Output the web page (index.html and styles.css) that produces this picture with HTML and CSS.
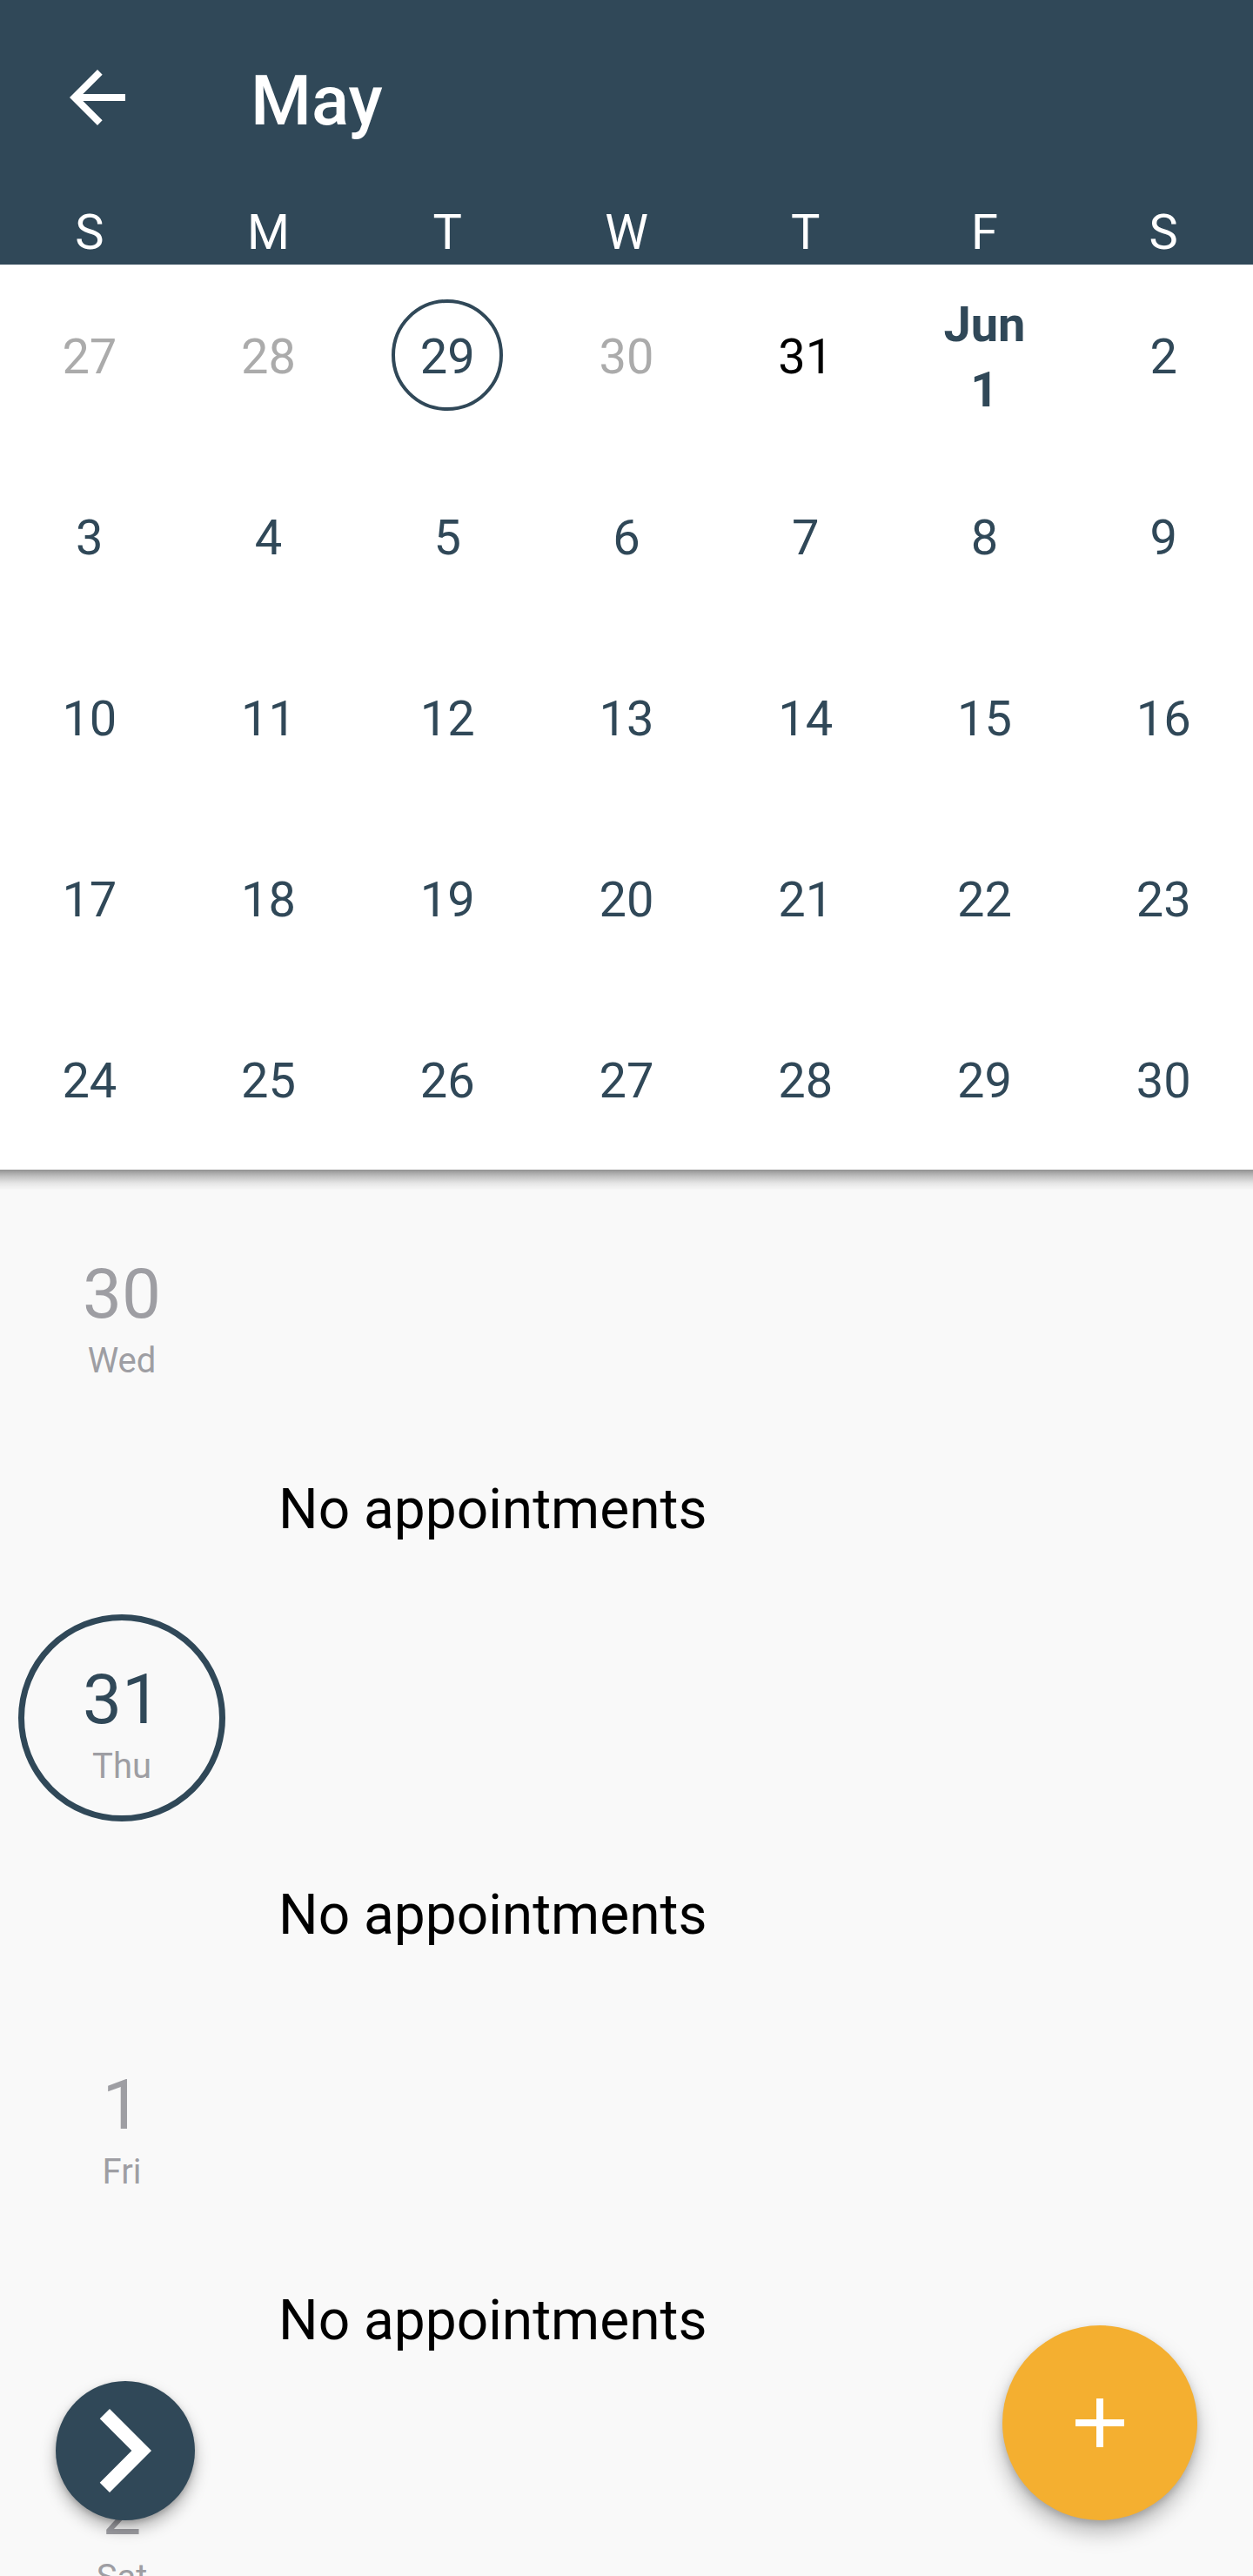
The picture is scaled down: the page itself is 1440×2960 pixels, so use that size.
FILE: index.html
```html
<!DOCTYPE html>
<html lang="en">
<head>
<meta charset="utf-8">
<title>May</title>
<link rel="stylesheet" href="styles.css">
</head>
<body>
<div class="screen">
  <header class="appbar">
    <div class="toolbar">
      <div class="nav-btn">
        <svg class="nav-icon" viewBox="0 0 24 24" width="96" height="96"><path fill="#ffffff" d="M20 11H7.83l5.59-5.59L12 4l-8 8 8 8 1.41-1.41L7.83 13H20v-2z"/></svg>
      </div>
      <h1 class="title">May</h1>
    </div>
    <div class="weekdays">
      <span>S</span><span>M</span><span>T</span><span>W</span><span>T</span><span>F</span><span>S</span>
    </div>
  </header>

  <section class="month">
    <div class="day muted">27</div>
    <div class="day muted">28</div>
    <div class="day"><span class="today-ring">29</span></div>
    <div class="day muted">30</div>
    <div class="day selected">31</div>
    <div class="day month-start"><span>Jun</span><span>1</span></div>
    <div class="day">2</div>

    <div class="day">3</div><div class="day">4</div><div class="day">5</div><div class="day">6</div><div class="day">7</div><div class="day">8</div><div class="day">9</div>
    <div class="day">10</div><div class="day">11</div><div class="day">12</div><div class="day">13</div><div class="day">14</div><div class="day">15</div><div class="day">16</div>
    <div class="day">17</div><div class="day">18</div><div class="day">19</div><div class="day">20</div><div class="day">21</div><div class="day">22</div><div class="day">23</div>
    <div class="day">24</div><div class="day">25</div><div class="day">26</div><div class="day">27</div><div class="day">28</div><div class="day">29</div><div class="day">30</div>
  </section>

  <section class="agenda">
    <div class="agenda-day">
      <div class="badge"><span class="badge-num">30</span><span class="badge-dow">Wed</span></div>
      <div class="empty">No appointments</div>
    </div>
    <div class="agenda-day">
      <div class="badge current"><span class="badge-num">31</span><span class="badge-dow">Thu</span></div>
      <div class="empty">No appointments</div>
    </div>
    <div class="agenda-day">
      <div class="badge"><span class="badge-num">1</span><span class="badge-dow">Fri</span></div>
      <div class="empty">No appointments</div>
    </div>
    <div class="agenda-day">
      <div class="badge"><span class="badge-num">2</span><span class="badge-dow">Sat</span></div>
    </div>
  </section>

  <button class="next-btn" aria-label="Next">
    <svg viewBox="6 4 12 16" width="96" height="128"><path fill="#ffffff" d="M10 6L8.59 7.41 13.17 12l-4.58 4.59L10 18l6-6z"/></svg>
  </button>
  <button class="fab" aria-label="Add">
    <svg viewBox="0 0 56 56" width="56" height="56"><rect x="24" y="0" width="8" height="56" fill="#ffffff"/><rect x="0" y="24" width="56" height="8" fill="#ffffff"/></svg>
  </button>
</div>
</body>
</html>
```

FILE: styles.css
```css
html, body {
  margin: 0;
  padding: 0;
}

body {
  font-family: Roboto, "Liberation Sans", Arial, sans-serif;
  background: #f9f9f9;
}

.screen {
  position: relative;
  width: 1440px;
  height: 2960px;
  overflow: hidden;
  background: #f9f9f9;
}

/* ---------- App bar ---------- */
.appbar {
  background: #304858;
  color: #ffffff;
  height: 304px;
  display: flex;
  flex-direction: column;
}

.toolbar {
  height: 224px;
  display: flex;
  align-items: center;
}

.nav-btn {
  width: 96px;
  height: 96px;
  margin-left: 64px;
  display: flex;
  align-items: center;
  justify-content: center;
}

.nav-icon {
  display: block;
}

.title {
  margin: 0 0 0 128px;
  padding-top: 7px;
  font-size: 80px;
  line-height: 80px;
  font-weight: 500;
  color: #ffffff;
}

.weekdays {
  display: grid;
  grid-template-columns: repeat(7, 1fr);
  padding-top: 15px;
  height: 80px;
  box-sizing: border-box;
}

.weekdays span {
  text-align: center;
  font-size: 56px;
  line-height: 56px;
  color: #ffffff;
}

/* ---------- Month grid ---------- */
.month {
  position: relative;
  z-index: 2;
  background: #ffffff;
  display: grid;
  grid-template-columns: repeat(7, 1fr);
  grid-auto-rows: 208px;
}

.month::after {
  content: "";
  position: absolute;
  left: 0;
  right: 0;
  top: 100%;
  height: 24px;
  background: linear-gradient(to bottom, rgba(0,0,0,0.42), rgba(0,0,0,0.24) 30%, rgba(0,0,0,0.08) 65%, rgba(0,0,0,0));
}

.day {
  display: flex;
  flex-direction: column;
  align-items: center;
  justify-content: center;
  font-size: 56px;
  line-height: 56px;
  color: #304858;
  padding-top: 3px;
  box-sizing: border-box;
}

.day.muted {
  color: #ababab;
}

.day.selected {
  color: #000000;
}

.today-ring {
  width: 128px;
  height: 128px;
  box-sizing: border-box;
  border: 4px solid #304858;
  border-radius: 50%;
  display: flex;
  align-items: center;
  justify-content: center;
  margin-top: -3px;
  padding-top: 3px;
}

.day.month-start {
  font-weight: 700;
  line-height: 75px;
  padding-top: 6px;
}

/* ---------- Agenda ---------- */
.agenda {
  padding-top: 45px;
  background: #f9f9f9;
}

.agenda-day {
  display: flex;
  flex-direction: column;
}

.badge {
  width: 238px;
  height: 238px;
  margin-left: 21px;
  box-sizing: border-box;
  border: 7px solid transparent;
  border-radius: 50%;
  padding-top: 51px;
  display: flex;
  flex-direction: column;
  align-items: center;
  color: #9e9ea3;
}

.badge.current {
  border-color: #304858;
}

.badge-num {
  font-size: 80px;
  line-height: 80px;
}

.badge.current .badge-num {
  color: #304858;
}

.badge-dow {
  font-size: 40px;
  line-height: 40px;
  margin-top: 17px;
}

.empty {
  padding: 70px 0 82px 320px;
  font-size: 64px;
  line-height: 76px;
  color: #000000;
}

/* ---------- Floating buttons ---------- */
.next-btn {
  position: absolute;
  left: 64px;
  top: 2736px;
  width: 160px;
  height: 160px;
  border: none;
  padding: 0;
  border-radius: 50%;
  background: #304858;
  box-shadow: 0 10px 18px rgba(0,0,0,0.28), 0 3px 6px rgba(0,0,0,0.18);
  display: flex;
  align-items: center;
  justify-content: center;
  z-index: 5;
}

.next-btn svg {
  display: block;
  margin-left: -4px;
}

.fab {
  position: absolute;
  left: 1152px;
  top: 2672px;
  width: 224px;
  height: 224px;
  border: none;
  padding: 0;
  border-radius: 50%;
  background: #f4af30;
  box-shadow: 0 14px 24px rgba(0,0,0,0.26), 0 4px 8px rgba(0,0,0,0.16);
  display: flex;
  align-items: center;
  justify-content: center;
  z-index: 5;
}

.fab svg {
  display: block;
}
```
